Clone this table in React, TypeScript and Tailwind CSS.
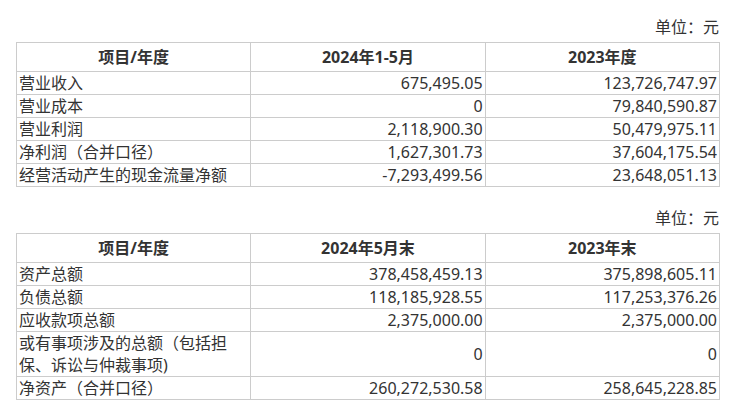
import React from "react";

const font = {
  fontFamily: '"Noto Sans", "Noto Sans CJK SC", sans-serif',
};

type Row = { label: React.ReactNode; a: string; b: string; tall?: boolean };

const t1: Row[] = [
  { label: "营业收入", a: "675,495.05", b: "123,726,747.97" },
  { label: "营业成本", a: "0", b: "79,840,590.87" },
  { label: "营业利润", a: "2,118,900.30", b: "50,479,975.11" },
  { label: "净利润（合并口径）", a: "1,627,301.73", b: "37,604,175.54" },
  { label: "经营活动产生的现金流量净额", a: "-7,293,499.56", b: "23,648,051.13" },
];

const t2: Row[] = [
  { label: "资产总额", a: "378,458,459.13", b: "375,898,605.11" },
  { label: "负债总额", a: "118,185,928.55", b: "117,253,376.26" },
  { label: "应收款项总额", a: "2,375,000.00", b: "2,375,000.00" },
  {
    label: (
      <>
        或有事项涉及的总额（包括担
        <br />
        保、诉讼与仲裁事项)
      </>
    ),
    a: "0",
    b: "0",
    tall: true,
  },
  { label: "净资产（合并口径）", a: "260,272,530.58", b: "258,645,228.85" },
];

function Table({ h1, h2, rows }: { h1: string; h2: string; rows: Row[] }) {
  return (
    <table className="w-full table-fixed border-collapse text-[16px] leading-[22px] text-[#333]">
      <colgroup>
        <col className="w-1/3" />
        <col className="w-1/3" />
        <col className="w-1/3" />
      </colgroup>
      <thead>
        <tr className="h-[29px]">
          <th className="border border-[#cccccc] text-center font-bold text-[#333] p-0">项目/年度</th>
          <th className="border border-[#cccccc] text-center font-bold text-[#333] p-0">{h1}</th>
          <th className="border border-[#cccccc] text-center font-bold text-[#333] p-0">{h2}</th>
        </tr>
      </thead>
      <tbody>
        {rows.map((r, i) => (
          <tr key={i}>
            <td className="border border-[#cccccc] px-[2px] py-0 text-left align-middle whitespace-nowrap">{r.label}</td>
            <td className="border border-[#cccccc] px-[2px] py-0 text-right align-middle">{r.a}</td>
            <td className="border border-[#cccccc] px-[2px] py-0 text-right align-middle">{r.b}</td>
          </tr>
        ))}
      </tbody>
    </table>
  );
}

export default function App() {
  return (
    <div className="w-[736px] h-[407px] bg-white px-4 pt-4 overflow-hidden" style={font}>
      <div className="text-right text-[16px] leading-[22px] text-[#333] pr-[1px]">单位：元</div>
      <div className="mt-1">
        <Table h1="2024年1-5月" h2="2023年度" rows={t1} />
      </div>
      <div className="mt-[20px] text-right text-[16px] leading-[22px] text-[#333] pr-[1px]">单位：元</div>
      <div className="mt-1">
        <Table h1="2024年5月末" h2="2023年末" rows={t2} />
      </div>
    </div>
  );
}
